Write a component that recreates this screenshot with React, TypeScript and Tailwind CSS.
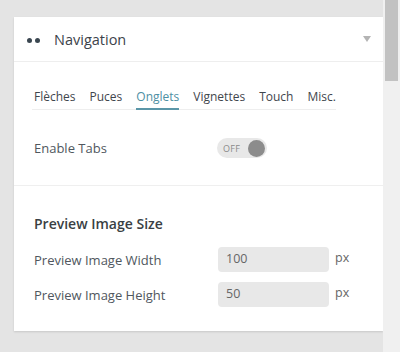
import React from "react";

const tabs = ["Flèches", "Puces", "Onglets", "Vignettes", "Touch", "Misc."];

export default function App() {
  return (
    <div
      className="flex w-[400px] h-[352px] overflow-hidden bg-[#e4e4e4]"
      style={{ fontFamily: '"Open Sans", "Noto Sans", sans-serif' }}
    >
      <div className="flex-1 pl-[14px] pt-[17px]">
        <div className="w-[369px] bg-white shadow-[0_1px_2px_rgba(0,0,0,0.13)]">
          {/* Header */}
          <div className="h-[45px] flex items-center justify-between pl-[13px] pr-[12px] pt-[2px] border-b border-[#eeeeee]">
            <div className="flex items-center">
              <span className="w-[5px] h-[5px] rounded-full bg-[#3a4650]" />
              <span className="w-[5px] h-[5px] rounded-full bg-[#3a4650] ml-[3px]" />
              <span className="ml-[14px] text-[14.5px] text-[#3c434a] leading-[20px]">Navigation</span>
            </div>
            <svg width="8" height="6" viewBox="0 0 8 6" className="mt-[-2px]">
              <polygon points="0,0 8,0 4,6" fill="#b4b4b4" />
            </svg>
          </div>

          {/* Tabs + toggle */}
          <div className="px-[18px] pt-[26px] pb-[27px] border-b border-[#efefef]">
            <div className="flex w-fit pl-[2px] border-b border-[#eeeeee] gap-[14px]">
              {tabs.map((t) => (
                <span
                  key={t}
                  className={
                    t === "Onglets"
                      ? "text-[12px] leading-[18px] pb-[2px] border-b-2 border-[#5a96a8] -mb-px text-[#4d8fa3]"
                      : "text-[12px] leading-[18px] pb-[2px] border-b-2 border-transparent -mb-px text-[#3f464d]"
                  }
                >
                  {t}
                </span>
              ))}
            </div>
            <div className="flex items-center h-[20px] mt-[28px] pl-[2px]">
              <span className="w-[183px] text-[13px] text-[#50575e] leading-[18px]">Enable Tabs</span>
              <div className="w-[50px] h-[20px] rounded-full bg-[#e8e8e8] flex items-center justify-between pl-[6px] pr-[2px]">
                <span className="text-[9px] text-[#8a8a8a] leading-none tracking-[0.3px]">OFF</span>
                <span className="w-[17px] h-[17px] rounded-full bg-[#8c8c8c]" />
              </div>
            </div>
          </div>

          {/* Preview image size */}
          <div className="pl-[20px] pr-[20px] pt-[28px] pb-[24px]">
            <div className="text-[14px] font-semibold text-[#3a3f44] leading-[20px]">Preview Image Size</div>
            <div className="flex items-center mt-[13px]">
              <span className="w-[184px] text-[13px] text-[#50575e] leading-[18px]">Preview Image Width</span>
              <div className="w-[111px] h-[25px] rounded-[4px] bg-[#e8e8e8] flex items-center pl-[8px] text-[12.5px] text-[#666]">
                100
              </div>
              <span className="ml-[6px] text-[12.5px] text-[#666] leading-[18px] mt-[-4px]">px</span>
            </div>
            <div className="flex items-center mt-[10px]">
              <span className="w-[184px] text-[13px] text-[#50575e] leading-[18px]">Preview Image Height</span>
              <div className="w-[111px] h-[25px] rounded-[4px] bg-[#e8e8e8] flex items-center pl-[8px] text-[12.5px] text-[#666]">
                50
              </div>
              <span className="ml-[6px] text-[12.5px] text-[#666] leading-[18px] mt-[-4px]">px</span>
            </div>
          </div>
        </div>
      </div>
      {/* scrollbar */}
      <div className="w-[17px] h-full bg-[#f0f0f0] pl-[2px] pr-[2px]">
        <div className="h-[81px] bg-[#c2c2c2]" />
      </div>
    </div>
  );
}
